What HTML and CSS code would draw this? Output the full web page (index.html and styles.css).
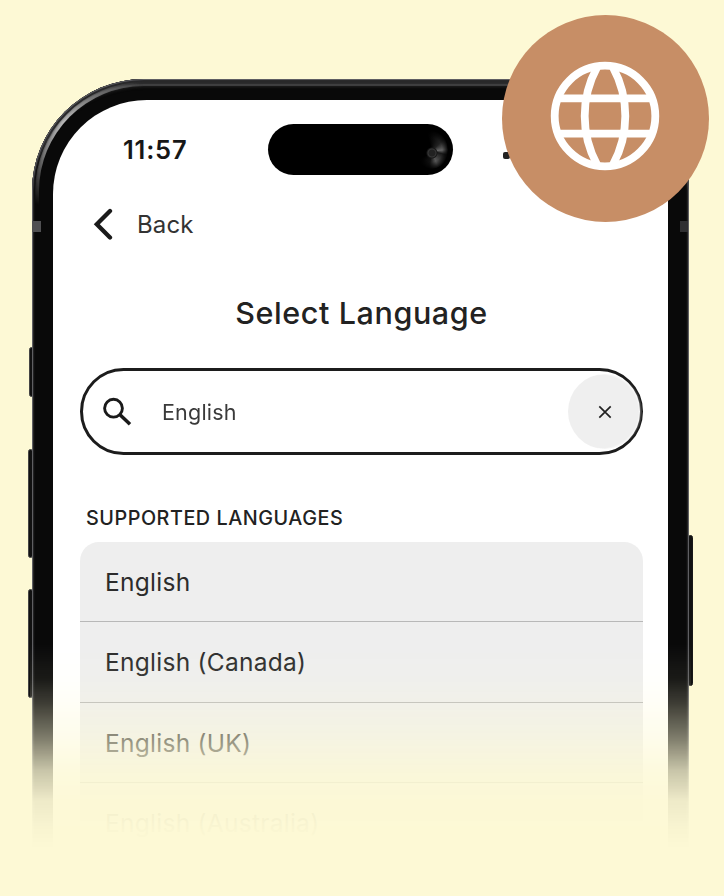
FILE: index.html
```html
<!DOCTYPE html>
<html lang="en">
<head>
<meta charset="utf-8">
<title>Select Language</title>
<link rel="stylesheet" href="styles.css">
</head>
<body>
<main class="stage">
  <div class="phone">
    <i class="key key-action"></i>
    <i class="key key-up"></i>
    <i class="key key-down"></i>
    <i class="key key-power"></i>
    <div class="frame">
      <i class="band band-left"></i>
      <i class="band band-right"></i>
      <div class="screen">
        <header class="status">
          <span class="time">11:57</span>
          <span class="island"><i class="lens"></i></span>
          <span class="signal"></span>
        </header>
        <nav class="back">
          <svg width="20" height="32" viewBox="0 0 20 32"><path d="M17 3 3.800 16.200 17 29.500" fill="none" stroke="#1a1a1a" stroke-width="4.300" stroke-linecap="round"/></svg>
          <span class="back-label">Back</span>
        </nav>
        <h1 class="title">Select Language</h1>
        <div class="search">
          <svg class="glass" width="30" height="30" viewBox="0 0 30 30" fill="none" stroke="#1a1a1a"><circle cx="10.500" cy="11.200" r="8.900" stroke-width="2.900"/><path d="M17 17.800 27 27.300" stroke-width="3.500"/></svg>
          <span class="query">English</span>
          <span class="clear"><svg width="14" height="14" viewBox="0 0 14 14"><path d="M1.300 1.300 12.700 12.700M12.700 1.300 1.300 12.700" stroke="#222" stroke-width="1.700"/></svg></span>
        </div>
        <h2 class="section">SUPPORTED LANGUAGES</h2>
        <ul class="list">
          <li>English</li>
          <li>English (Canada)</li>
          <li>English (UK)</li>
          <li>English (Australia)</li>
        </ul>
      </div>
    </div>
  </div>
  <div class="badge">
    <svg width="110" height="110" viewBox="0 0 110 110" fill="none" stroke="#fff" stroke-width="7.800">
      <circle cx="55" cy="55" r="50.300"/>
      <path d="M8 37.400H102M8 72.700H102M47 6.500Q34.700 29 34.700 55T47 103.500M63 6.500Q75.300 29 75.300 55T63 103.500"/>
    </svg>
  </div>
</main>
</body>
</html>
```
FILE: styles.css
```css
* { box-sizing: border-box; }
body { margin: 0; background: #fdf9d5; font-family: Inter, "Liberation Sans", sans-serif; color: #222; }
.stage { position: relative; width: 724px; height: 896px; overflow: hidden; padding: 79px 35px 0 32px; }
.phone {
  position: relative;
  height: 817px;
  mask-image: linear-gradient(#000 565px, rgba(0,0,0,.93) 600px, rgba(0,0,0,.78) 625px, rgba(0,0,0,.5) 661px, rgba(0,0,0,.22) 691px, rgba(0,0,0,.06) 722px, rgba(0,0,0,.02) 748px, transparent 770px);
  mask-clip: no-clip;
}
.frame {
  position: relative;
  height: 900px;
  padding: 21px;
  border-radius: 112px 112px 0 0;
  background: #090909;
  box-shadow: inset 0 0 1px 1px #66666a, inset 0 0 2px 2px #222224, inset 0 6px 1px -1px #2b2b2c, inset 0 8px 1px -1px #424243, inset 0 9px 2px 0 #151515;
}
.frame::before {
  content: "";
  position: absolute;
  inset: 3px;
  border-radius: 109px 109px 0 0;
  padding: 4px;
  background: radial-gradient(circle at 26px 38px, #bbb, #777 38px, transparent 88px);
  mask: linear-gradient(#000 0 0) content-box exclude, linear-gradient(#000 0 0);
  filter: blur(1px);
}
.screen { position: relative; height: 880px; padding: 24px 25px 0 27px; background: #fff; border-radius: 94px 94px 0 0; }
.key { position: absolute; width: 5px; background: #111; border: 1px solid #454545; border-radius: 3px; }
.key-action { left: -3px; top: 268px; height: 50px; }
.key-up { left: -4px; top: 370px; height: 109px; }
.key-down { left: -4px; top: 510px; height: 109px; }
.key-power { right: -4px; top: 456px; height: 151px; border-color: #181818; }
.band { position: absolute; top: 142px; width: 9px; height: 11px; background: #505052; filter: blur(.6px); }
.band-left { left: 0; }
.band-right { right: 1px; width: 8px; background: #303032; }
.status { display: flex; align-items: center; height: 51px; }
.time { width: 188px; padding-left: 43px; font-size: 25.500px; font-weight: 600; letter-spacing: .8px; color: #171717; }
.island { display: flex; justify-content: flex-end; align-items: center; width: 185px; height: 51px; padding-right: 5px; border-radius: 26px; background: #000; }
.lens {
  width: 32px; height: 38px; border-radius: 50%;
  background: radial-gradient(circle at 16px 22px, #222 3px, #383838 4px, #161616 5px, transparent 6px), conic-gradient(from 45deg at 16px 20px, #222, #666 40deg, #181818 60deg, #333 85deg, #555 115deg, #111 145deg, #000 190deg, #000 300deg, #222);
  mask-image: radial-gradient(#000 45%, transparent 72%);
}
.signal { width: 7px; height: 7px; margin: 11px 0 0 50px; border-radius: 2px; background: #222; }
.back { display: flex; align-items: center; height: 32px; margin: 33px 0 0 13px; }
.back-label { margin-left: 24px; padding-top: 1px; font-size: 24px; letter-spacing: .1px; color: #333; }
.title { margin: 53px 0 0; height: 40px; line-height: 40px; text-align: center; font-size: 30.500px; font-weight: 500; letter-spacing: .6px; }
.search { display: flex; align-items: center; height: 87px; margin-top: 35px; padding-left: 20px; border: 3px solid #1c1c1c; border-radius: 44px; background: #fff; }
.query { margin-left: 29px; font-size: 21.500px; letter-spacing: .2px; color: #3a3a3a; }
.clear { display: flex; align-items: center; justify-content: center; width: 74px; height: 75px; margin-left: auto; margin-right: -2px; border-radius: 50%; background: radial-gradient(circle at 34px 50%, #efefef 36px, rgba(239,239,239,.15) 39px); }
.section { margin: 50px 0 0 6px; height: 26px; line-height: 26px; font-size: 19.800px; font-weight: 500; letter-spacing: .53px; white-space: nowrap; }
.list { list-style: none; margin: 11px 0 0; padding: 0; border-radius: 19px 19px 0 0; background: #eee; }
.list li { height: 80.300px; padding-left: 25px; line-height: 80px; border-bottom: 1.500px solid #b8b8b8; font-size: 24.500px; letter-spacing: .27px; color: #2c2c2c; }
.badge { position: absolute; left: 502px; top: 15px; width: 207px; height: 207px; border-radius: 50%; background: #c78e66; display: flex; align-items: center; justify-content: center; padding: 0 1px 6px 0; }
```
